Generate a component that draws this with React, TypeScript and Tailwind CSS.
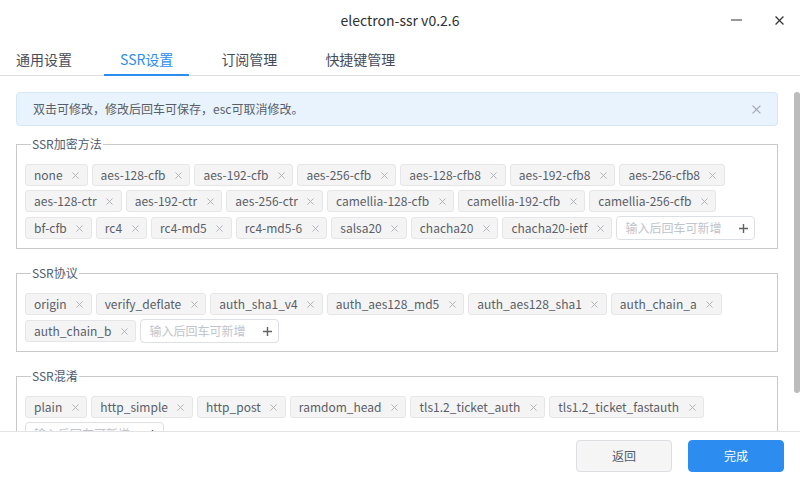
import React from 'react';

const METHODS = [
  'none', 'aes-128-cfb', 'aes-192-cfb', 'aes-256-cfb', 'aes-128-cfb8', 'aes-192-cfb8', 'aes-256-cfb8',
  'aes-128-ctr', 'aes-192-ctr', 'aes-256-ctr', 'camellia-128-cfb', 'camellia-192-cfb', 'camellia-256-cfb',
  'bf-cfb', 'rc4', 'rc4-md5', 'rc4-md5-6', 'salsa20', 'chacha20', 'chacha20-ietf',
];
const PROTOCOLS = [
  'origin', 'verify_deflate', 'auth_sha1_v4', 'auth_aes128_md5', 'auth_aes128_sha1', 'auth_chain_a', 'auth_chain_b',
];
const OBFS = ['plain', 'http_simple', 'http_post', 'ramdom_head', 'tls1.2_ticket_auth', 'tls1.2_ticket_fastauth'];

const TABS = ['通用设置', 'SSR设置', '订阅管理', '快捷键管理'];

const Cross: React.FC<{ size?: number; color?: string; width?: number }> = ({ size = 8, color = '#a8abb2', width = 1 }) => (
  <svg width={size} height={size} viewBox="0 0 8 8" fill="none">
    <path d="M0.5 0.5L7.5 7.5M7.5 0.5L0.5 7.5" stroke={color} strokeWidth={width} />
  </svg>
);

const Tag: React.FC<{ label: string }> = ({ label }) => (
  <div className="flex h-[22px] items-center rounded-[3px] border border-[#e6e6e8] bg-[#f4f4f5] pl-[8px] pr-[3px] text-[12px] leading-none text-[#5a5e66]">
    <span>{label}</span>
    <span className="ml-[5px] flex h-4 w-4 items-center justify-center">
      <Cross size={7} />
    </span>
  </div>
);

const NewTagInput: React.FC = () => (
  <div className="flex h-[24px] w-[139px] items-center justify-between rounded-[4px] border border-[#dcdfe6] bg-white pl-[8px] pr-[6px]">
    <span className="text-[12px] leading-none text-[#c0c4cc]">输入后回车可新增</span>
    <svg width="9" height="9" viewBox="0 0 9 9">
      <path d="M4.5 0V9M0 4.5H9" stroke="#606266" strokeWidth="1.4" />
    </svg>
  </div>
);

const Group: React.FC<{ title: string; items: string[]; className?: string }> = ({ title, items, className = '' }) => (
  <fieldset className={`border border-[#c9c9c9] px-[8px] pt-[11px] pb-[8px] ${className}`}>
    <legend className="ml-[6px] px-[1px] text-[12px] leading-[18px] text-[#515a6e]">{title}</legend>
    <div className="flex flex-wrap items-center gap-x-[4px] gap-y-[4px]">
      {items.map((t) => (
        <Tag key={t} label={t} />
      ))}
      <NewTagInput />
    </div>
  </fieldset>
);

const App: React.FC = () => {
  return (
    <div
      className="flex h-[480px] w-[800px] flex-col overflow-hidden bg-white"
      style={{ fontFamily: '"Noto Sans CJK SC", "Noto Sans", sans-serif' }}
    >
      {/* title bar */}
      <div className="relative flex h-[40px] shrink-0 items-center justify-center">
        <span className="text-[14px] text-[#303133]">electron-ssr v0.2.6</span>
        <div className="absolute right-[16px] top-0 flex h-full items-center gap-[33px]">
          <svg width="11" height="2" viewBox="0 0 11 2">
            <path d="M0 1H11" stroke="#333" strokeWidth="1" />
          </svg>
          <Cross size={9} color="#333" width={1.1} />
        </div>
      </div>

      {/* tabs */}
      <div className="flex h-[36px] shrink-0 border-b border-[#dcdee2]">
        {TABS.map((t, i) => (
          <div
            key={t}
            className={`-mb-px flex h-[36px] items-end border-b-2 px-[16px] pb-[5px] text-[14px] leading-[20px] ${
              i === 0 ? '' : 'ml-[16px]'
            } ${i === 1 ? 'border-[#2d8cf0] text-[#2d8cf0]' : 'border-transparent text-[#464c5b]'}`}
          >
            {t}
          </div>
        ))}
      </div>

      {/* body */}
      <div className="flex min-h-0 flex-1">
        <div className="min-w-0 flex-1 overflow-hidden px-[16px] pt-[16px]">
          <div className="flex h-[34px] items-center justify-between rounded-[4px] border border-[#d3e6fa] bg-[#e8f3fe] pl-[16px] pr-[16px]">
            <span className="text-[12px] text-[#5a5e66]">双击可修改，修改后回车可保存，esc可取消修改。</span>
            <Cross size={9} color="#a0a4aa" width={1} />
          </div>
          <Group title="SSR加密方法" items={METHODS} className="mt-[9px]" />
          <Group title="SSR协议" items={PROTOCOLS} className="mt-[15px]" />
          <Group title="SSR混淆" items={OBFS} className="mt-[15px]" />
        </div>
        <div className="w-[6px] shrink-0 pt-[16px]">
          <div className="h-[301px] w-[6px] rounded-[3px] bg-[#bcbcbc]" />
        </div>
      </div>

      {/* footer */}
      <div className="flex h-[49px] shrink-0 items-center justify-end gap-[16px] border-t border-[#e4e4e4] px-[16px]">
        <button className="h-[32px] w-[96px] rounded-[4px] border border-[#dcdee2] bg-[#f5f5f5] text-[12px] text-[#515a6e]">
          返回
        </button>
        <button className="h-[32px] w-[96px] rounded-[4px] border border-[#2d8cf0] bg-[#2d8cf0] text-[12px] text-white">
          完成
        </button>
      </div>
    </div>
  );
};

export default App;
